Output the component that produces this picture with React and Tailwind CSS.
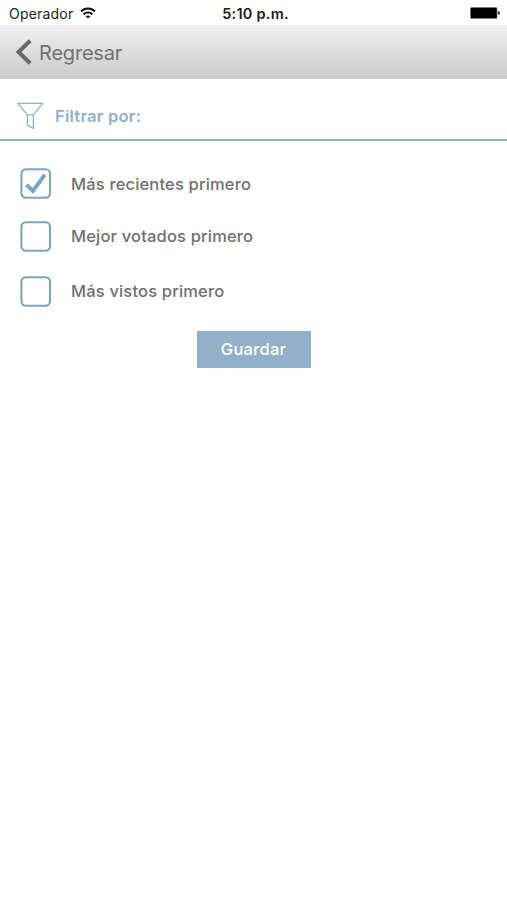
import { useState } from 'react';

const OPTIONS = [
  { id: 'recent', label: 'Más recientes primero', row: 'h-[53px]' },
  { id: 'voted', label: 'Mejor votados primero', row: 'h-[52px]' },
  { id: 'viewed', label: 'Más vistos primero', row: 'h-[58px]' },
];

function StatusBar() {
  return (
    <div className="grid grid-cols-3 items-center h-[25px] pt-[3px] pl-[9px] pr-[7px] text-black">
      <div className="flex items-center gap-[7px]">
        <span className="text-[14px] leading-5 tracking-[0.2px] text-[#1c1c1c]">Operador</span>
        <svg className="-mt-0.5" width="16" height="12" viewBox="0 0 16 12" fill="none"
          stroke="#111" strokeWidth="2">
          <path d="M1 4.4C5 .4 11 .4 15 4.4" />
          <path d="M3.6 7.2c2.6-2.4 6.2-2.4 8.8 0" />
          <path d="M8 11.6L5.6 9.3c1.4-1.2 3.4-1.2 4.8 0z" fill="#111" stroke="none" />
        </svg>
      </div>
      <span className="pl-0.5 text-center text-[14.5px] leading-5 tracking-[0.25px] font-semibold text-[#1c1c1c] whitespace-nowrap">
        5:10 p.m.
      </span>
      <svg className="justify-self-end -mt-0.5" width="30" height="12" viewBox="0 0 30 12">
        <rect x="0.5" y="0.5" width="26.5" height="11" rx="1" fill="#000" stroke="#777" strokeWidth="0.6" />
        <path d="M27.8 4.3h.5a1.7 1.7 0 0 1 0 3.4h-.5z" fill="#333" />
      </svg>
    </div>
  );
}

function Checkbox({ checked }) {
  return (
    <svg width="31" height="31" viewBox="0 0 31 31" fill="none" stroke="#7fa4c1">
      <rect x="1.4" y="1.2" width="28.6" height="28.6" rx="4.5" strokeWidth="2.1" />
      {checked && <path d="M6.5 16.8l6.4 6.1L24.8 6.6" strokeWidth="4" />}
    </svg>
  );
}

export default function App() {
  const [selected, setSelected] = useState('recent');

  return (
    <div className="min-h-screen bg-white font-['Inter','Liberation_Sans',sans-serif]">
      <StatusBar />

      {/* Header */}
      <header className="flex items-center h-[54px] pl-[15px] bg-linear-to-b from-[#f0f0f0] to-[#cbcbcb]">
        <button className="flex items-center gap-[7px] cursor-pointer">
          <svg width="17" height="26" viewBox="0 0 17 26" fill="none" stroke="#6a6a6a" strokeWidth="4">
            <path d="M15.2 1.7L3.5 13l11.7 11.3" />
          </svg>
          <span className="pt-px text-[20px] leading-6 tracking-[-0.2px] text-[#707070]">Regresar</span>
        </button>
      </header>

      {/* Filter title */}
      <div className="flex items-center gap-[11px] h-[62px] pl-[17px] pt-3.5 border-b-2 border-[#8fb1ca]">
        <svg width="27" height="28" viewBox="0 0 27 28" fill="none" stroke="#8fb1ca" strokeWidth="1.3"
          strokeLinejoin="round">
          <path d="M.8 1.3h24.8L16.4 12.8h-6z" />
          <path d="M10.4 12.8v10.4l6 3.2V12.8" />
        </svg>
        <h1 className="text-[16.5px] leading-6 tracking-[0.25px] font-semibold text-[#8fb1ca]">Filtrar por:</h1>
      </div>

      {/* Sort options */}
      <div className="flex flex-col pt-4">
        {OPTIONS.map((option) => (
          <button
            key={option.id}
            role="checkbox"
            aria-checked={selected === option.id}
            onClick={() => setSelected(option.id)}
            className={`flex items-center gap-5 pl-5 text-left cursor-pointer ${option.row}`}
          >
            <Checkbox checked={selected === option.id} />
            <span className="text-[16.5px] leading-6 tracking-[0.17px] font-medium text-[#707070]">
              {option.label}
            </span>
          </button>
        ))}
      </div>

      <div className="flex justify-center pt-[11px]">
        <button className="w-[114px] h-[37px] pb-px bg-[#91b1c9] text-white text-[16.5px] leading-6 tracking-[0.25px] font-medium cursor-pointer">
          Guardar
        </button>
      </div>
    </div>
  );
}
